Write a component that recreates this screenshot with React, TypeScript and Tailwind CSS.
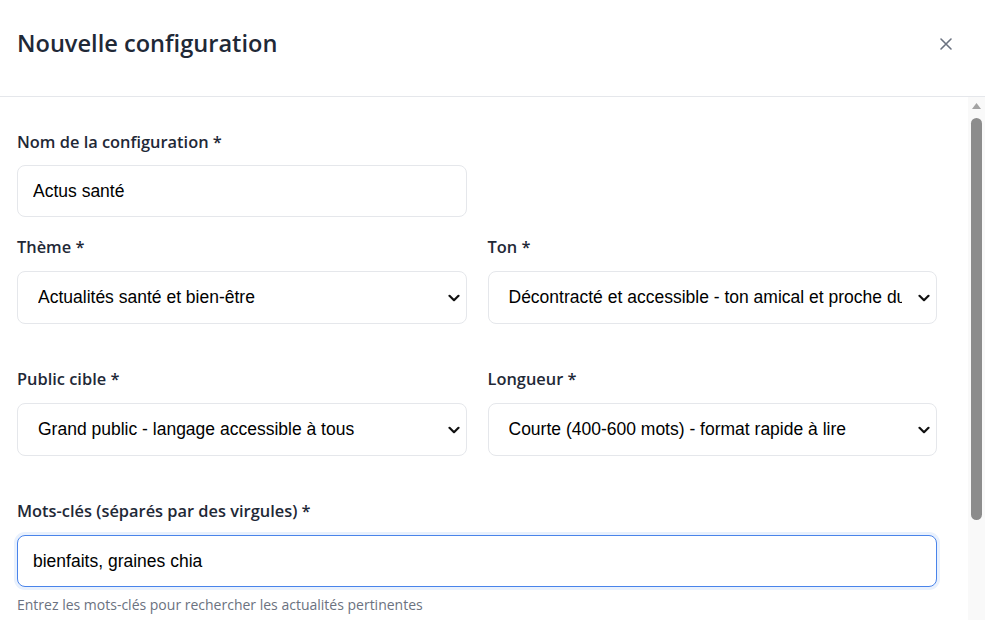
import { ChangeEvent, useState } from "react"

const label = "block text-[16.4px] leading-[24px] font-semibold text-[#1f2937] font-['Open_Sans',sans-serif]"
const base = "w-full h-[52px] rounded-[8px] border bg-white text-[17.5px] text-black outline-none font-['Liberation_Sans',Arial,sans-serif]"
const field = base + " border-[#e5e7eb]"
const focused = base + " border-[#4a84ea] ring-[3px] ring-[#e9f1fd]"

function Chevron() {
    return (
        <svg className="pointer-events-none absolute right-[7px] top-1/2 -translate-y-1/2" width="12" height="8" viewBox="0 0 12 8" fill="none">
            <path d="M1.5 1.8 6 6.2l4.5-4.4" stroke="#111" strokeWidth="2.2" strokeLinecap="round" strokeLinejoin="round" />
        </svg>
    )
}

function Select({value, options}: Readonly<{value: string, options: string[]}>) {
    const [v, setV] = useState(value)
    return (
        <div className="relative">
            <select
                value={v}
                onChange={(e: ChangeEvent<HTMLSelectElement>) => setV(e.target.value)}
                className={field + " appearance-none pl-[20px] pr-[34px] h-[53px] whitespace-nowrap overflow-hidden"}
            >
                {options.map((o) => <option key={o}>{o}</option>)}
            </select>
            <Chevron />
        </div>
    )
}

export default function App() {
    const [name, setName] = useState("Actus santé")
    const [keywords, setKeywords] = useState("bienfaits, graines chia")

    return (
        <div className="h-[620px] w-[985px] overflow-hidden bg-white flex flex-col">
            {/* header */}
            <div className="h-[97px] shrink-0 border-b border-[#e5e7eb] flex items-center justify-between pl-[17px] pr-[32px] pb-[9px]">
                <h1 className="text-[23.6px] font-semibold text-[#1f2937] font-['Open_Sans',sans-serif]">Nouvelle configuration</h1>
                <button className="text-[#6b7280]" aria-label="Fermer">
                    <svg width="14" height="14" viewBox="0 0 14 14" fill="none">
                        <path d="M2 2l10 10M12 2 2 12" stroke="currentColor" strokeWidth="1.6" strokeLinecap="round" />
                    </svg>
                </button>
            </div>

            <div className="flex flex-1 min-h-0">
                {/* form body */}
                <div className="flex-1 pl-[17px] pr-[31px] pt-[33px]">
                    <label className={label}>Nom de la configuration *</label>
                    <div className="grid grid-cols-2 gap-x-[21px] mt-[11px]">
                        <input value={name} onChange={(e) => setName(e.target.value)} className={field + " px-[15px]"} />
                    </div>

                    <div className="grid grid-cols-2 gap-x-[21px] mt-[18px]">
                        <div>
                            <label className={label}>Thème *</label>
                            <div className="mt-[12px]">
                                <Select value="Actualités santé et bien-être" options={["Actualités santé et bien-être", "Nutrition", "Sport et fitness"]} />
                            </div>
                        </div>
                        <div>
                            <label className={label}>Ton *</label>
                            <div className="mt-[12px]">
                                <Select value="Décontracté et accessible - ton amical et proche du lecteur" options={["Décontracté et accessible - ton amical et proche du lecteur", "Professionnel et informatif"]} />
                            </div>
                        </div>
                    </div>

                    <div className="grid grid-cols-2 gap-x-[21px] mt-[43px]">
                        <div>
                            <label className={label}>Public cible *</label>
                            <div className="mt-[12px]">
                                <Select value="Grand public - langage accessible à tous" options={["Grand public - langage accessible à tous", "Professionnels de santé"]} />
                            </div>
                        </div>
                        <div>
                            <label className={label}>Longueur *</label>
                            <div className="mt-[12px]">
                                <Select value="Courte (400-600 mots) - format rapide à lire" options={["Courte (400-600 mots) - format rapide à lire", "Moyenne (800-1200 mots)", "Longue (1500+ mots)"]} />
                            </div>
                        </div>
                    </div>

                    <label className={label + " mt-[43px]"}>Mots-clés (séparés par des virgules) *</label>
                    <input
                        value={keywords}
                        onChange={(e) => setKeywords(e.target.value)}
                        className={focused + " mt-[12px] px-[15px]"}
                    />
                    <p className="mt-[8px] text-[14px] leading-[20px] text-[#6b7280] font-['Open_Sans',sans-serif]">Entrez les mots-clés pour rechercher les actualités pertinentes</p>
                </div>

                {/* scrollbar */}
                <div className="w-[17px] shrink-0 bg-[#f9f9f9] flex flex-col items-center pt-[6px]">
                    <svg width="9" height="6" viewBox="0 0 9 6"><path d="M4.5 0 9 6H0z" fill="#a3a3a3" /></svg>
                    <div className="mt-[9px] w-[11px] h-[402px] rounded-full bg-[#8c8c8c]" />
                </div>
            </div>
        </div>
    )
}
